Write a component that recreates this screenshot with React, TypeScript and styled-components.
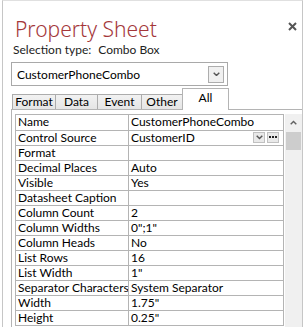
import React from "react";
import styled, { createGlobalStyle } from "styled-components";

type Prop = {
  name: string;
  value: string;
  builder?: boolean;
};

const props: Prop[] = [
  { name: "Name", value: "CustomerPhoneCombo" },
  { name: "Control Source", value: "CustomerID", builder: true },
  { name: "Format", value: "" },
  { name: "Decimal Places", value: "Auto" },
  { name: "Visible", value: "Yes" },
  { name: "Datasheet Caption", value: "" },
  { name: "Column Count", value: "2" },
  { name: "Column Widths", value: '0";1"' },
  { name: "Column Heads", value: "No" },
  { name: "List Rows", value: "16" },
  { name: "List Width", value: '1"' },
  { name: "Separator Characters", value: "System Separator" },
  { name: "Width", value: '1.75"' },
  { name: "Height", value: '0.25"' },
];

const tabs = [
  { label: "Format", width: 44 },
  { label: "Data", width: 43 },
  { label: "Event", width: 45 },
  { label: "Other", width: 42 },
  { label: "All", width: 47 },
];

const GlobalStyle = createGlobalStyle`
  body {
    margin: 0;
    background: #fff;
    font-family: Lato, "Noto Sans", sans-serif;
    font-size: 12px;
    color: #000;
  }
`;

const Frame = styled.div`
  position: relative;
  box-sizing: border-box;
  width: 301px;
  height: 327px;
  margin-left: 2px;
  padding: 16px 0 0 8px;
  border-left: 1px solid #c6c6c6;
  border-right: 1px solid #c6c6c6;
  border-top: 1px solid #e0e0e0;
  overflow: hidden;
`;

const Header = styled.div`
  display: flex;
  justify-content: space-between;
  align-items: flex-start;
`;

const Title = styled.div`
  margin-left: 4px;
  font-family: "Noto Sans", sans-serif;
  font-size: 21px;
  line-height: 24px;
  font-weight: 300;
  color: #a4373a;
`;

const CloseButton = styled.div`
  display: flex;
  margin: 5px 5px 0 0;
  width: 9px;
  height: 9px;
`;

const SelectionLabel = styled.div`
  display: flex;
  gap: 7px;
  margin: 0 0 0 2px;
  line-height: 17px;
  color: #222;
`;

const Combo = styled.div`
  box-sizing: border-box;
  display: flex;
  align-items: center;
  justify-content: space-between;
  width: 217px;
  height: 24px;
  margin-top: 4px;
  padding: 0 3px 0 5px;
  border: 1px solid #a9a9a9;
  background: #fff;
`;

const ComboButton = styled.div`
  box-sizing: border-box;
  display: flex;
  align-items: center;
  justify-content: center;
  width: 16px;
  height: 17px;
  border: 1px solid #adadad;
  background: #f0f0f0;
`;

const Tabs = styled.div`
  display: flex;
  align-items: flex-end;
  margin: 2px 0 0 1px;
  position: relative;
  z-index: 1;
`;

const Tab = styled.div<{ active?: boolean; w: number }>`
  box-sizing: border-box;
  width: ${({ w }) => w}px;
  height: ${({ active }) => (active ? "22px" : "15px")};
  margin-left: -1px;
  margin-bottom: ${({ active }) => (active ? "-1px" : "0")};
  padding-top: ${({ active }) => (active ? "2px" : "0")};
  border: 1px solid ${({ active }) => (active ? "#b4b4b4" : "#acacac")};
  border-bottom: none;
  background: ${({ active }) =>
    active ? "#fff" : "linear-gradient(#f2f2f2, #e5e5e5)"};
  text-align: center;
  line-height: 14px;
  color: #000;

  &:first-child {
    margin-left: 0;
  }
`;

const Panel = styled.div`
  display: flex;
  align-items: flex-start;
  padding: 4px 0 0 3px;
  height: 230px;
  border: 1px solid #b4b4b4;
  border-right: none;
  border-bottom: none;
`;

const Grid = styled.div`
  width: 269px;
  border-top: 1px solid #b4b4b4;
  border-left: 1px solid #b4b4b4;
`;

const Row = styled.div<{ tall?: boolean }>`
  display: grid;
  grid-template-columns: 113px 155px;
  height: ${({ tall }) => (tall ? "16px" : "15px")};
`;

const Cell = styled.div`
  position: relative;
  box-sizing: border-box;
  padding-left: 2px;
  border-right: 1px solid #b4b4b4;
  border-bottom: 1px solid #b4b4b4;
  line-height: 14px;
  white-space: nowrap;
  overflow: hidden;
`;

const CellButtons = styled.div`
  position: absolute;
  top: 1px;
  right: 4px;
  display: flex;
  gap: 2px;
`;

const SmallButton = styled.div`
  box-sizing: border-box;
  display: flex;
  align-items: center;
  justify-content: center;
  width: 12px;
  height: 11px;
  border: 1px solid #c0c0c0;
  background: #e9e9e9;
`;

const ScrollBar = styled.div`
  display: flex;
  flex-direction: column;
  align-items: center;
  width: 17px;
  height: 220px;
  margin-left: 1px;
  background: #f0f0f0;
`;

const ScrollArrow = styled.div`
  display: flex;
  align-items: center;
  justify-content: center;
  width: 17px;
  height: 17px;
`;

const Thumb = styled.div`
  width: 15px;
  height: 18px;
  margin-top: 1px;
  background: #cdcdcd;
`;

const Chevron = ({ up, size = 7, color = "#444" }: { up?: boolean; size?: number; color?: string }) => (
  <svg width={size} height={size * 0.7} viewBox="0 0 10 7">
    <path
      d={up ? "M1 6 L5 2 L9 6" : "M1 1 L5 5 L9 1"}
      fill="none"
      stroke={color}
      strokeWidth="2"
    />
  </svg>
);

const Ellipsis = () => (
  <svg width="8" height="3" viewBox="0 0 8 3">
    <rect x="0" y="0" width="2" height="2" fill="#222" />
    <rect x="3" y="0" width="2" height="2" fill="#222" />
    <rect x="6" y="0" width="2" height="2" fill="#222" />
  </svg>
);

export default function App() {
  return (
    <>
      <GlobalStyle />
      <Frame>
        <Header>
          <Title>Property Sheet</Title>
          <CloseButton>
            <svg width="9" height="9" viewBox="0 0 9 9">
              <path d="M1 1 L8 8 M8 1 L1 8" stroke="#555" strokeWidth="2" />
            </svg>
          </CloseButton>
        </Header>
        <SelectionLabel>
          <span>Selection type:</span>
          <span>Combo Box</span>
        </SelectionLabel>
        <Combo>
          <span>CustomerPhoneCombo</span>
          <ComboButton>
            <Chevron color="#555" />
          </ComboButton>
        </Combo>
        <Tabs>
          {tabs.map(({ label, width }) => (
            <Tab key={label} w={width} active={label === "All"}>
              {label}
            </Tab>
          ))}
        </Tabs>
        <Panel>
          <Grid>
            {props.map(({ name, value, builder }, i) => (
              <Row key={name} tall={i === 0}>
                <Cell>{name}</Cell>
                <Cell>
                  {value}
                  {builder && (
                    <CellButtons>
                      <SmallButton>
                        <Chevron size={7} color="#555" />
                      </SmallButton>
                      <SmallButton>
                        <Ellipsis />
                      </SmallButton>
                    </CellButtons>
                  )}
                </Cell>
              </Row>
            ))}
          </Grid>
          <ScrollBar>
            <ScrollArrow>
              <Chevron up size={7} color="#606060" />
            </ScrollArrow>
            <Thumb />
          </ScrollBar>
        </Panel>
      </Frame>
    </>
  );
}
